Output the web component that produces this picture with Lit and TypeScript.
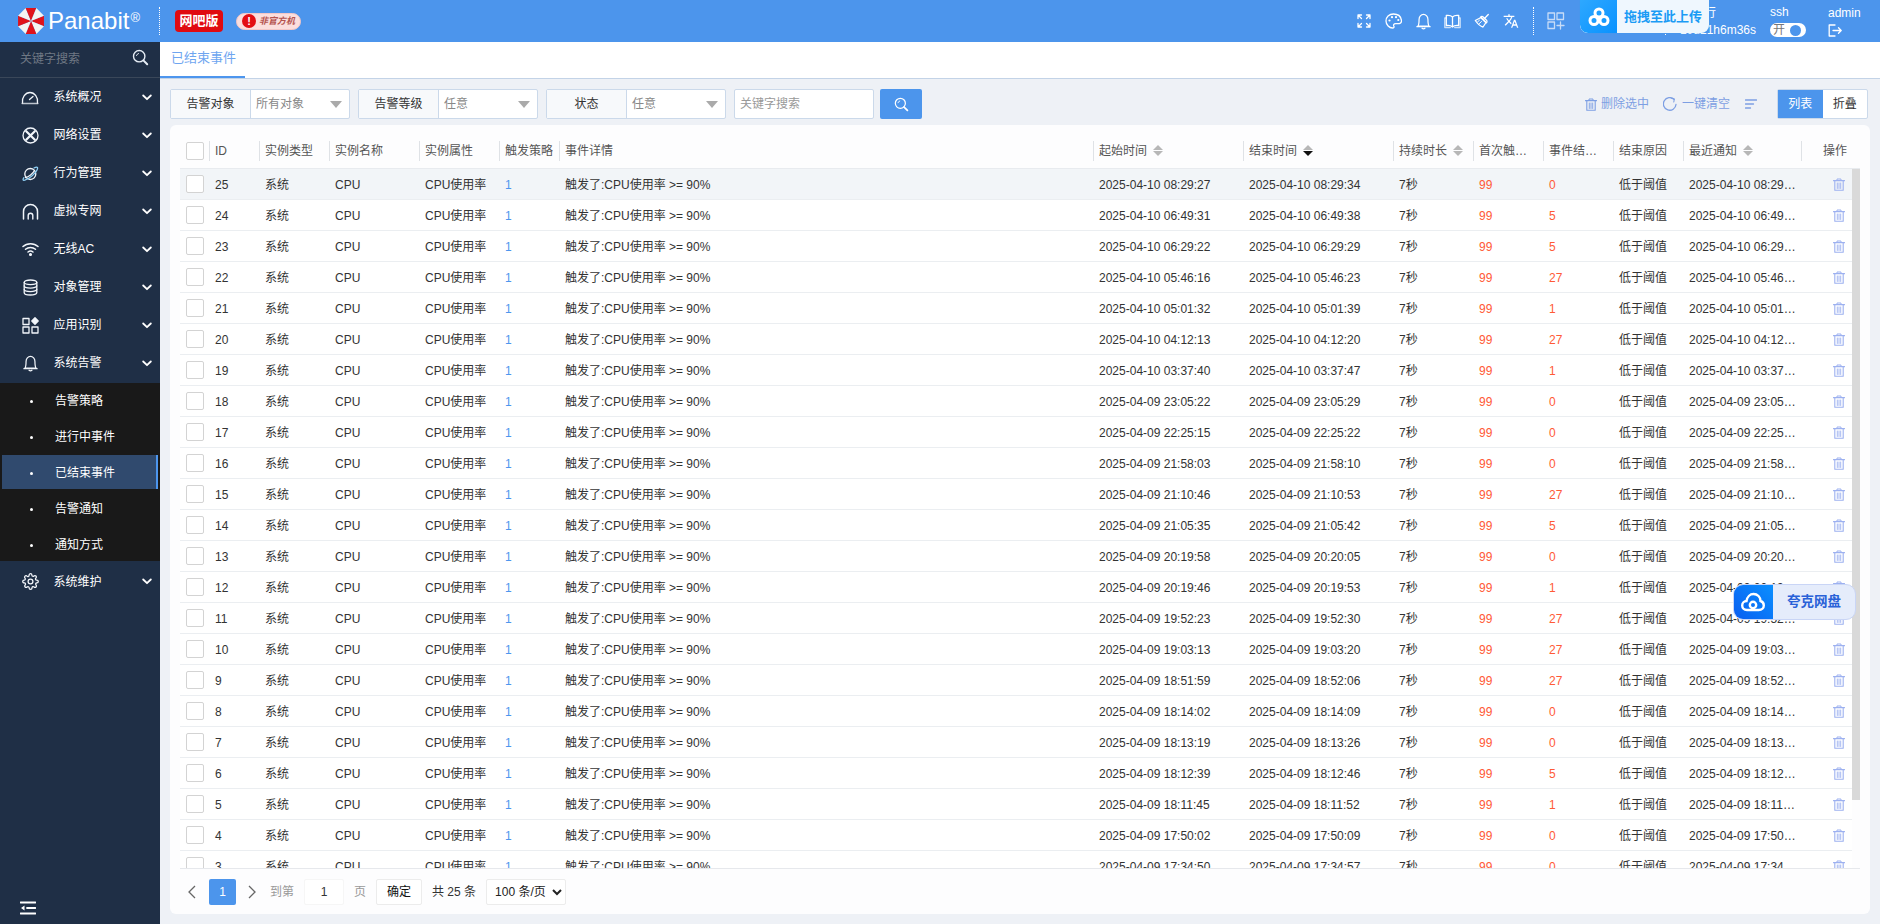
import { LitElement, html, css, svg } from "lit";
import { customElement } from "lit/decorators.js";

const ic = (w: number, h: number, vb: string, body: unknown, cls = "") =>
  html`<svg class="ic ${cls}" width=${w} height=${h} viewBox=${vb} fill="none" stroke="currentColor" stroke-width="1.3" stroke-linecap="round" stroke-linejoin="round">${body}</svg>`;

const bell = svg`<path d="M3 13.5c1-1 1.3-2.400 1.300-7a4.700 5.500 0 0 1 9.400 0c0 4.600.3 6 1.300 7z"/><path d="M2 14h14"/><path d="M7.5 15.6c.8.7 2.2.7 3 0"/>`;

const navIcons: Record<string, unknown> = {
  gauge: ic(18, 15, "0 0 18 15", svg`<path d="M1.5 13c-.9-5.400 3-10.500 7.500-10.500S17.400 7.600 16.500 13"/><path d="M1.200 13.500h15.600" stroke-width="1.600" opacity=".75"/><path d="M8.500 9.500l3.500-3"/>`),
  net: ic(17, 17, "0 0 17 17", svg`<circle cx="8.500" cy="8.500" r="7.500"/><path d="M4.200 4.200l8.600 8.600M12.800 4.200l-8.600 8.600" stroke-width="2.200"/>`),
  planet: ic(17, 17, "0 0 17 17", svg`<circle cx="8.300" cy="9" r="5.500"/><path d="M3.500 12.500C6.500 12 11 8.500 12.500 5.500" /><path d="M12 3c3-1.500 4.500-.9 3 2C13.500 8.500 7 14 2.800 15.200c-2 .5-2.300-.7-.9-2.500" stroke="#8fd0f5"/>`),
  arch: ic(17, 17, "0 0 17 17", svg`<path d="M1.500 16V8.500a7 7 0 0 1 14 0V16" stroke-width="1.500"/><path d="M6.200 16v-3.500a2.300 2.300 0 0 1 4.600 0V16" stroke-width="1.400"/>`),
  wifi: ic(17, 14, "0 0 17 14", svg`<path d="M1 4.500c4-3.800 11-3.800 15 0" stroke-width="1.500"/><path d="M3.500 7.300c2.800-2.500 7.200-2.500 10 0" stroke-width="1.500"/><path d="M6 10c1.500-1.200 3.500-1.200 5 0" stroke-width="1.500"/><circle cx="8.500" cy="12.500" r=".9" fill="currentColor"/>`),
  db: ic(15, 17, "0 0 15 17", svg`<ellipse cx="7.500" cy="3.300" rx="6.300" ry="2.300"/><path d="M1.200 3.300v10.400c0 1.300 2.800 2.300 6.300 2.300s6.300-1 6.300-2.300V3.300"/><path d="M1.200 6.800c0 1.300 2.800 2.300 6.300 2.300s6.300-1 6.300-2.300M1.200 10.300c0 1.300 2.800 2.300 6.300 2.300s6.300-1 6.300-2.300"/>`),
  apps: ic(17, 17, "0 0 17 17", svg`<rect x="1" y="1.500" width="6" height="6"/><rect x="1" y="10" width="6" height="6"/><rect x="10" y="10" width="6" height="6"/><path d="M13 .8l3.200 3.200-3.200 3.200L9.800 4z" fill="currentColor"/>`),
  bell: ic(17, 17, "0 0 18 17", bell),
  gear: ic(17, 17, "0 0 24 24", svg`<circle cx="12" cy="12" r="3.400" stroke-width="1.800"/><path stroke-width="1.800" d="M19.400 15a1.650 1.650 0 0 0 .33 1.820l.06.06a2 2 0 1 1-2.830 2.830l-.06-.06a1.650 1.650 0 0 0-2.800 1.170V21a2 2 0 0 1-4 0v-.09A1.650 1.650 0 0 0 7.300 19.700l-.06.06a2 2 0 1 1-2.830-2.830l.06-.06A1.650 1.650 0 0 0 3.300 14H3a2 2 0 0 1 0-4h.09A1.650 1.650 0 0 0 4.300 7.300l-.06-.06a2 2 0 1 1 2.830-2.830l.06.06A1.650 1.650 0 0 0 10 3.090V3a2 2 0 0 1 4 0v.09a1.650 1.650 0 0 0 2.800 1.170l.06-.06a2 2 0 1 1 2.830 2.830l-.06.06A1.650 1.650 0 0 0 20.910 10H21a2 2 0 0 1 0 4h-.09a1.650 1.650 0 0 0-1.510 1z"/>`),
};

const trash = ic(12, 13, "0 0 12 13", svg`<path d="M.5 2.600h11" stroke-width="1.200"/><path d="M4 2.400V1h4v1.400" stroke-width="1"/><path d="M1.800 3v9.300h8.400V3" stroke-width="1.100"/><path d="M4.300 5v5.500M6 5v5.500M7.700 5v5.500" stroke-width=".9"/>`);

const search = (c: string, s = 17) => ic(s, s, "0 0 17 17", svg`<circle cx="7.200" cy="7.200" r="5.700" stroke=${c} stroke-width="1.400"/><path d="M11.400 11.400l3.800 3.800" stroke=${c} stroke-width="2"/><path d="M4.500 6.500a3 3 0 0 1 2-2" stroke=${c} stroke-width="1"/>`);

const carets = (active = false) => html`<span class="carets"><i class="up"></i><i class="down ${active ? "on" : ""}"></i></span>`;

const logo = () => {
  const cx = 15, cy = 15, r = 15;
  const pts = Array.from({ length: 8 }, (_, i) => {
    const a = (Math.PI / 4) * i - Math.PI / 8;
    return [cx + r * Math.cos(a), cy + r * Math.sin(a)];
  });
  return html`<svg class="logo" width="28" height="28" viewBox="0 0 30 30">
    ${pts.map((p, i) => {
      const q = pts[(i + 1) % 8];
      return svg`<path d="M${cx} ${cy}L${p[0].toFixed(2)} ${p[1].toFixed(2)}L${q[0].toFixed(2)} ${q[1].toFixed(2)}Z" fill=${i % 2 ? "#f4f4f2" : "#e0131b"}/>`;
    })}
  </svg>`;
};

const chev = html`<svg class="chev" width="10" height="7" viewBox="0 0 10 7" fill="none" stroke="currentColor" stroke-width="1.800" stroke-linecap="round" stroke-linejoin="round"><path d="M1.200 1.500L5 5.200l3.800-3.700"/></svg>`;

const NAV_TOP = [
  ["系统概况", "gauge"], ["网络设置", "net"], ["行为管理", "planet"], ["虚拟专网", "arch"],
  ["无线AC", "wifi"], ["对象管理", "db"], ["应用识别", "apps"], ["系统告警", "bell"],
];
const SUB = ["告警策略", "进行中事件", "已结束事件", "告警通知", "通知方式"];

const HEAD: [string, boolean, boolean][] = [
  ["ID", false, false], ["实例类型", false, false], ["实例名称", false, false], ["实例属性", false, false],
  ["触发策略", false, false], ["事件详情", false, false], ["起始时间", true, false], ["结束时间", true, true],
  ["持续时长", true, false], ["首次触发值", false, false], ["事件结束值", false, false], ["结束原因", false, false], ["最近通知", true, false],
];

const DATA: [number, string, string, string, number][] = [
  [25, "04-10", "08:29:27", "08:29:34", 0], [24, "04-10", "06:49:31", "06:49:38", 5],
  [23, "04-10", "06:29:22", "06:29:29", 5], [22, "04-10", "05:46:16", "05:46:23", 27],
  [21, "04-10", "05:01:32", "05:01:39", 1], [20, "04-10", "04:12:13", "04:12:20", 27],
  [19, "04-10", "03:37:40", "03:37:47", 1], [18, "04-09", "23:05:22", "23:05:29", 0],
  [17, "04-09", "22:25:15", "22:25:22", 0], [16, "04-09", "21:58:03", "21:58:10", 0],
  [15, "04-09", "21:10:46", "21:10:53", 27], [14, "04-09", "21:05:35", "21:05:42", 5],
  [13, "04-09", "20:19:58", "20:20:05", 0], [12, "04-09", "20:19:46", "20:19:53", 1],
  [11, "04-09", "19:52:23", "19:52:30", 27], [10, "04-09", "19:03:13", "19:03:20", 27],
  [9, "04-09", "18:51:59", "18:52:06", 27], [8, "04-09", "18:14:02", "18:14:09", 0],
  [7, "04-09", "18:13:19", "18:13:26", 0], [6, "04-09", "18:12:39", "18:12:46", 5],
  [5, "04-09", "18:11:45", "18:11:52", 1], [4, "04-09", "17:50:02", "17:50:09", 0],
  [3, "04-09", "17:34:50", "17:34:57", 0], [2, "04-09", "17:12:08", "17:12:15", 0],
  [1, "04-09", "16:58:41", "16:58:48", 5],
];

@customElement("app-root")
export class AppRoot extends LitElement {
  static styles = css`
    :host { display: block; width: 100%; height: 100vh; overflow: hidden; position: relative;
      font: 12px/16px "Liberation Sans", "Noto Sans CJK SC", sans-serif; color: #333; background: #eef1f6; }
    * { box-sizing: border-box; }
    input, select, button { font: inherit; }
    .ic { display: block; flex: none; }
    .app { display: grid; grid-template-rows: 42px 1fr; height: 100%; }

    /* top bar */
    .top { background: #4c95ec; color: #fff; display: flex; align-items: center; padding-right: 20px; }
    .brand { width: 159px; display: flex; align-items: center; padding-left: 17px; flex: none; }
    .logo { display: block; flex: none; }
    .brand b { font-weight: 400; font-size: 24px; margin-left: 3px; line-height: 28px; }
    .reg { font-size: 13px; line-height: 14px; align-self: flex-start; margin: 4px 0 0 1px; }
    .dots { width: 0; height: 28px; border-left: 1px dotted #fff; flex: none; }
    .ver { margin-left: 15px; width: 48px; height: 22px; background: #e00a10; border-radius: 4px; font-size: 13px; font-weight: 700;
      display: flex; align-items: center; justify-content: center; flex: none; }
    .unoff { margin-left: 13px; width: 65px; height: 17px; border-radius: 9px; background: #fbdedd; border: 1px solid #f3c7c7;
      display: flex; align-items: center; padding-left: 5px; gap: 3px; color: #b4534f; font-size: 9px; font-weight: 700; font-style: italic; flex: none; }
    .unoff i { width: 14px; height: 14px; border-radius: 50%; background: #e30d12; color: #fff; font-size: 11px; font-style: normal; font-weight: 700;
      display: flex; align-items: center; justify-content: center; flex: none; }
    .tools { margin-left: auto; display: flex; align-items: center; }
    .tool { width: 29.400px; display: flex; justify-content: center; }
    .top .dots.a { margin-left: 7px; }
    .grid { margin: 0 100px 0 13px; color: #c7dcf7; }
    .run { width: 90px; display: flex; flex-direction: column; align-items: flex-end; gap: 3px; line-height: 14px; }
    .run span:first-child { margin-right: 40px; }
    .ssh { margin-left: 14px; width: 36px; display: flex; flex-direction: column; gap: 4px; line-height: 14px; }
    .toggle { width: 36px; height: 14px; border-radius: 7px; background: #fff; color: #777; display: flex; align-items: center; padding: 0 5px 0 3px; font-size: 12px; justify-content: space-between; }
    .toggle i { width: 11px; height: 11px; border-radius: 50%; background: #4c95ec; }
    .adm { margin-left: 22px; width: 32px; display: flex; flex-direction: column; gap: 4px; line-height: 14px; }

    /* body layout */
    .body { display: grid; grid-template-columns: 160px 1fr; min-height: 0; }
    .side { background: #1f2f46; color: #fff; display: flex; flex-direction: column; min-height: 0; }
    .sfind { height: 36px; flex: none; border-bottom: 1px solid #3a4759; display: flex; align-items: center; padding: 0 11px 2px 20px; }
    .sfind input { flex: 1; min-width: 0; background: transparent; border: 0; outline: 0; color: #fff; padding: 0; font-size: 12px; }
    .sfind input::placeholder { color: #6f7884; }
    .sfind .ic { color: #e6edf5; margin-top: -3px; }
    .nav { height: 38px; flex: none; display: flex; align-items: center; font-size: 12px; }
    .nav.low { padding-top: 3px; }
    .nav .ni { width: 53.500px; display: flex; justify-content: center; padding-left: 6.500px; flex: none; color: #f2f6fb; }
    .nav .nt { flex: 1; }
    .chev { margin-right: 8px; color: #fff; }
    .subs { background: #191919; flex: none; margin-top: 1px; height: 178px; }
    .sub { height: 36px; display: flex; align-items: center; font-size: 12px; position: relative; padding-left: 55px; }
    .sub::before { content: ""; position: absolute; left: 30px; top: 50%; width: 3px; height: 3px; margin-top: -1px; background: #fff; border-radius: 50%; }
    .sub.on { background: linear-gradient(#304a6e, #304a6e) no-repeat 2px 0 / 156px 34px; }
    .sub.on::after { content: ""; position: absolute; right: 2px; top: 0; width: 2px; height: 34px; background: #4d96ee; }
    .sfoot { margin-top: auto; padding: 0 0 9px 20px; color: #fff; }

    /* main */
    .main { display: flex; flex-direction: column; min-width: 0; min-height: 0; }
    .tabs { height: 37px; flex: none; background: #fff; border-bottom: 1px solid #c3d3e7; display: flex; }
    .tab { width: 85px; height: 36px; border-bottom: 2px solid #4d96ee; color: #6ea5f0; font-size: 13px; padding: 0 0 3px 11px; display: flex; align-items: center; margin-bottom: -1px; }
    .filters { flex: none; display: flex; align-items: center; padding: 10px 12px 0 10px; height: 40px; margin-bottom: 6px; }
    .fg { width: 180px; height: 30px; margin-right: 8px; display: flex; border: 1px solid #cbd9ea; border-radius: 2px; background: #fff; flex: none; }
    .fg label { width: 80px; background: #f7f9fb; border-right: 1px solid #cbd9ea; display: flex; align-items: center; justify-content: center; color: #333; flex: none; }
    .fg .val { flex: 1; display: flex; align-items: center; justify-content: space-between; padding: 0 7px 0 5px; color: #888; }
    .tri { width: 0; height: 0; border: 6px solid transparent; border-top: 7px solid #aaa; border-bottom: 0; }
    .kw { width: 140px; height: 30px; border: 1px solid #cbd9ea; border-radius: 2px; padding: 0 5px; outline: 0; color: #333; flex: none; background: #fff; }
    .kw::placeholder { color: #999; }
    .go { margin-left: 6px; width: 42px; height: 30px; background: #4c95ec; border: 0; border-radius: 2px; display: flex; align-items: center; justify-content: center; padding: 0; flex: none; }
    .bar { margin-left: auto; display: flex; align-items: center; color: #7d9fe3; }
    .bar .txt { margin-left: 4px; }
    .bar .rf { margin-left: 14px; }
    .bar .txt.n { margin-left: 5px; }
    .bar .st { margin-left: 15px; }
    .seg { margin-left: 20px; display: flex; height: 30px; border: 1px solid #cbd9ea; border-radius: 2px; background: #fff; }
    .seg span { width: 44.500px; display: flex; align-items: center; justify-content: center; color: #333; }
    .seg span.on { background: #4c95ec; color: #fff; }

    .card { flex: 1; min-height: 0; margin: 0 10px 10px; background: #fdfdfe; border-radius: 6px; padding: 8px 10px 0; display: flex; flex-direction: column; }
    .head, .row { display: grid; grid-template-columns: 29px 50px 70px 90px 80px 60px 534px 150px 150px 80px 70px 70px 70px 118px minmax(0, 1fr); }
    .head { height: 36px; flex: none; border-bottom: 1px solid #e8ebef; align-items: center; color: #555; }
    .hc { height: 20px; display: flex; align-items: center; border-left: 1px solid #dfe2e6; padding: 0 6px 0 5px; min-width: 0; }
    .hc > span:first-child { white-space: nowrap; overflow: hidden; text-overflow: ellipsis; min-width: 0; }
    .hc.first { border-left: 0; padding: 0 0 0 6px; }
    .hc.op { justify-content: flex-end; padding-right: 13px; }
    .carets { display: flex; flex-direction: column; gap: 1px; margin-left: 6px; flex: none; }
    .carets i { display: block; width: 0; height: 0; border: 5px solid transparent; }
    .carets .up { border-bottom: 5px solid #b7b7b7; border-top: 0; }
    .carets .down { border-top: 5px solid #b7b7b7; border-bottom: 0; }
    .carets .down.on { border-top-color: #111; }
    .box { display: block; width: 18px; height: 18px; border: 1px solid #d3d3d3; border-radius: 2px; background: #fff; }
    .scroll { flex: 1; min-height: 0; display: flex; }
    .rows { flex: 1; min-width: 0; overflow: hidden; }
    .sb { width: 8px; flex: none; }
    .sb i { display: block; height: 631px; background: #d9d9d9; }
    .row { height: 31px; border-bottom: 1px solid #ebeef1; align-items: center; background: #fff; padding-top: 1px; }
    .row.on { background: #f2f5f8; }
    .c { padding: 0 6px; white-space: nowrap; overflow: hidden; text-overflow: ellipsis; min-width: 0; }
    .c.chk { padding: 0 0 0 6px; overflow: visible; margin-top: -1px; }
    .c.last { padding-right: 4px; }
    .c.hot { color: #ff5a36; }
    .c.lnk { color: #4d96ee; }
    .c.del { color: #9db1f0; display: flex; justify-content: flex-end; padding-right: 7px; overflow: visible; }
    .pager { height: 46px; flex: none; border-top: 1px solid #e6e8ec; display: flex; align-items: center; padding-left: 8px; color: #333; }
    .arrow { color: #666; flex: none; display: block; }
    .pg { margin: 0 12px 0 13px; width: 27px; height: 26px; background: #4c95ec; color: #fff; border-radius: 2px; display: flex; align-items: center; justify-content: center; flex: none; }
    .lbl { color: #999; margin-left: 14px; }
    .pi { margin-left: 10px; width: 40px; height: 26px; border: 1px solid #f6f6f6; border-radius: 2px; background: #fff; text-align: center; color: #333; outline: 0; padding: 0; }
    .lbl.e { margin-left: 10px; }
    .ok { margin-left: 10px; width: 46px; height: 26px; background: #fff; border: 1px solid #ececec; border-radius: 2px; color: #111; padding: 0; }
    .tot { margin-left: 10px; }
    .size { margin-left: 10px; width: 80px; height: 26px; background: #fff; border: 1px solid #ececec; border-radius: 2px; color: #222; padding-left: 4px; outline: 0; }

    /* floating overlays */
    .up-box { position: absolute; left: 1580px; top: 0; width: 129px; height: 33px; background: #eff7fe; border-radius: 0 0 8px 8px; display: flex; align-items: center; overflow: hidden; box-shadow: 0 0 1px #3aa0f5; }
    .up-box .bl { width: 37px; height: 33px; background: linear-gradient(135deg, #2ea8ff, #0992ff); display: flex; align-items: center; justify-content: center; border-radius: 0 0 0 8px; }
    .up-box span { margin-left: 7px; color: #1a9bf5; font-size: 13px; font-weight: 700; white-space: nowrap; }
    .quark { position: absolute; left: 1733px; top: 584px; width: 123px; height: 36px; background: #e5ecfb; border: 1px solid #c9d5f6; border-radius: 10px; display: flex; align-items: center; overflow: hidden; }
    .quark .bl { width: 40px; height: 36px; margin: -1px 0 -1px -1px; background: linear-gradient(45deg, #0a5df0, #0a90ff); display: flex; align-items: center; justify-content: center; }
    .quark span { margin-left: 14px; color: #2a62d8; font-size: 13.500px; font-weight: 700; white-space: nowrap; }
  `;

  render() {
    return html`
      <div class="app">
        <header class="top">
          <div class="brand">${logo()}<b>Panabit</b><span class="reg">®</span></div>
          <div class="dots"></div>
          <div class="ver">网吧版</div>
          <div class="unoff"><i>!</i>非官方机</div>
          <div class="tools">
            <span class="tool">${ic(14, 14, "0 0 14 14", svg`<path d="M1 4.500V1h3.500M1 1l3.500 3.500M13 4.500V1H9.500M13 1L9.500 4.500M1 9.500V13h3.500M1 13l3.500-3.500M13 9.500V13H9.500M13 13L9.500 9.500" stroke-width="1.300"/>`)}</span>
            <span class="tool">${ic(17, 16, "0 0 17 16", svg`<path d="M8.500 1C4 1 1 4 1 8c0 4 3.500 7 6.500 7 1.500 0 1.800-1 1.300-2-.6-1.300.2-2.300 1.700-2.300h2.500c2.200 0 3.500-1.300 3.500-3C16 3.500 13 1 8.500 1z"/><circle cx="4.500" cy="7.500" r="1.100" fill="currentColor" stroke="none"/><circle cx="7" cy="4.200" r="1.100" fill="currentColor" stroke="none"/><circle cx="11" cy="4.200" r="1.100" fill="currentColor" stroke="none"/><circle cx="13.300" cy="7" r="1.100" fill="currentColor" stroke="none"/>`)}</span>
            <span class="tool">${ic(17, 17, "0 0 18 17", bell)}</span>
            <span class="tool">${ic(17, 15, "0 0 17 15", svg`<path d="M8.500 3C7 1.500 4.500 1.200 2.300 1.500v10c2.200-.3 4.700 0 6.200 1.500 1.500-1.500 4-1.800 6.200-1.500v-10C12.500 1.200 10 1.500 8.500 3zM8.500 3v10"/><path d="M2.300 4H.8v9.500h5.500M14.700 4h1.500v9.500h-5.500" opacity=".7"/>`)}</span>
            <span class="tool">${ic(16, 16, "0 0 16 16", svg`<path d="M9.500 6.500l4.800-5M7 4.500l5 5-3 4.500c-1.500-.3-4.800-2.300-7.700-6.500z"/><path d="M5 10.800l2.500-2.300M3.500 9l2-1.800" stroke-width="1"/><path d="M6.500 4.200c1-1 2-.9 3 0l3 3c.8 1 .6 2-.3 2.700z"/>`)}</span>
            <span class="tool"><svg class="ic" width="16" height="16" viewBox="0 0 24 24" fill="currentColor"><path d="M12.870 15.070l-2.540-2.510.03-.03c1.740-1.940 2.980-4.170 3.710-6.530H17V4h-7V2H8v2H1v1.990h11.170C11.500 7.920 10.440 9.750 9 11.350 8.070 10.320 7.300 9.190 6.690 8h-2c.73 1.630 1.730 3.170 2.980 4.560l-5.090 5.020L4 19l5-5 3.110 3.110.76-2.040zM18.500 10h-2L12 22h2l1.120-3h4.750L21 22h2l-4.500-12zm-2.620 7l1.620-4.330L19.120 17h-3.240z"/></svg></span>
            <div class="dots a"></div>
            <span class="grid">${ic(18, 18, "0 0 18 18", svg`<rect x="1" y="1" width="6.500" height="6.500"/><rect x="10" y="1" width="6.500" height="6.500"/><rect x="1" y="10" width="6.500" height="6.500"/><path d="M13.500 10v7M10 13.500h7"/>`)}</span>
            <div class="dots b"></div>
            <div class="run"><span>运行</span><span>10d21h6m36s</span></div>
            <div class="ssh"><span>ssh</span><span class="toggle">开<i></i></span></div>
            <div class="adm"><span>admin</span>${ic(14, 13, "0 0 14 13", svg`<path d="M7 1H1.200v11H7"/><path d="M5 6.500h8M10.500 3.800l2.700 2.700-2.700 2.700"/>`)}</div>
          </div>
        </header>
        <div class="body">
          <aside class="side">
            <div class="sfind"><input placeholder="关键字搜索" />${search("#e6edf5")}</div>
            ${NAV_TOP.map(([t, i]) => html`<div class="nav"><span class="ni">${navIcons[i]}</span><span class="nt">${t}</span>${chev}</div>`)}
            <div class="subs">${SUB.map((s, i) => html`<div class="sub ${i === 2 ? "on" : ""}">${s}</div>`)}</div>
            <div class="nav low"><span class="ni">${navIcons.gear}</span><span class="nt">系统维护</span>${chev}</div>
            <div class="sfoot">${ic(16, 14, "0 0 16 14", svg`<path d="M.5 1.500h15M7 7h8.500M.5 12.500h15" stroke-width="1.800"/><path d="M4.500 4.500L1 7l3.500 2.500z" fill="currentColor" stroke="none"/>`)}</div>
          </aside>
          <main class="main">
            <div class="tabs"><div class="tab">已结束事件</div></div>
            <div class="filters">
              <div class="fg"><label>告警对象</label><div class="val">所有对象<i class="tri"></i></div></div>
              <div class="fg"><label>告警等级</label><div class="val">任意<i class="tri"></i></div></div>
              <div class="fg"><label>状态</label><div class="val">任意<i class="tri"></i></div></div>
              <input class="kw" placeholder="关键字搜索" />
              <button class="go">${search("#fff", 15)}</button>
              <div class="bar">
                ${trash}<span class="txt">删除选中</span>
                <span class="rf">${ic(14, 15, "0 0 14 15", svg`<path d="M11 2.300A6.300 6.300 0 1 0 13 7.500"/><path d="M8.500 1.200L11.300 2l-.5 3" stroke-width="1.100"/>`)}</span><span class="txt n">一键清空</span>
                <span class="st">${ic(12, 10, "0 0 12 10", svg`<path d="M.5 1h11M.5 5h8M.5 9h5" stroke-width="1.300"/>`)}</span>
                <div class="seg"><span class="on">列表</span><span>折叠</span></div>
              </div>
            </div>
            <section class="card">
              <div class="head">
                <div class="hc first"><span class="box"></span></div>
                ${HEAD.map(([t, s, on]) => html`<div class="hc"><span>${t}</span>${s ? carets(on) : ""}</div>`)}
                <div class="hc op"><span>操作</span></div>
              </div>
              <div class="scroll">
                <div class="rows">
                  ${DATA.map(([id, d, a, b, v], i) => html`
                    <div class="row ${i === 0 ? "on" : ""}">
                      <div class="c chk"><span class="box"></span></div>
                      <div class="c">${id}</div>
                      <div class="c">系统</div>
                      <div class="c">CPU</div>
                      <div class="c">CPU使用率</div>
                      <div class="c lnk">1</div>
                      <div class="c">触发了:CPU使用率 &gt;= 90%</div>
                      <div class="c">2025-${d} ${a}</div>
                      <div class="c">2025-${d} ${b}</div>
                      <div class="c">7秒</div>
                      <div class="c hot">99</div>
                      <div class="c hot">${v}</div>
                      <div class="c">低于阈值</div>
                      <div class="c last">2025-${d} ${b}</div>
                      <div class="c del">${trash}</div>
                    </div>`)}
                </div>
                <div class="sb"><i></i></div>
              </div>
              <div class="pager">
                <svg class="arrow" width="8" height="14" viewBox="0 0 8 14" fill="none" stroke="currentColor" stroke-width="1.300"><path d="M7 1L1 7l6 6"/></svg>
                <span class="pg">1</span>
                <svg class="arrow" width="8" height="14" viewBox="0 0 8 14" fill="none" stroke="currentColor" stroke-width="1.300"><path d="M1 1l6 6-6 6"/></svg>
                <span class="lbl">到第</span>
                <input class="pi" value="1" />
                <span class="lbl e">页</span>
                <button class="ok">确定</button>
                <span class="tot">共 25 条</span>
                <select class="size"><option>100 条/页</option></select>
              </div>
            </section>
          </main>
        </div>
      </div>
      <div class="up-box"><div class="bl"><svg width="22" height="20" viewBox="0 0 22 20"><circle cx="11" cy="6" r="4" fill="none" stroke="#fff" stroke-width="3"/><circle cx="6" cy="13.500" r="4" fill="none" stroke="#fff" stroke-width="3"/><circle cx="16" cy="13.500" r="4" fill="none" stroke="#fff" stroke-width="3"/></svg></div><span>拖拽至此上传</span></div>
      <div class="quark"><div class="bl"><svg width="24" height="20" viewBox="0 0 24 20" fill="none" stroke="#fff" stroke-width="2.400" stroke-linecap="round"><path d="M6 18c-3 0-4.800-2-4.800-4.500S3.200 9 5.500 9c.6-4 3.500-7 7-7 4 0 7 3 7 7 2 .5 3.300 2.200 3.300 4.500 0 2.500-2 4.500-5 4.500z"/><circle cx="12" cy="13" r="3.200"/></svg></div><span>夸克网盘</span></div>
    `;
  }
}
